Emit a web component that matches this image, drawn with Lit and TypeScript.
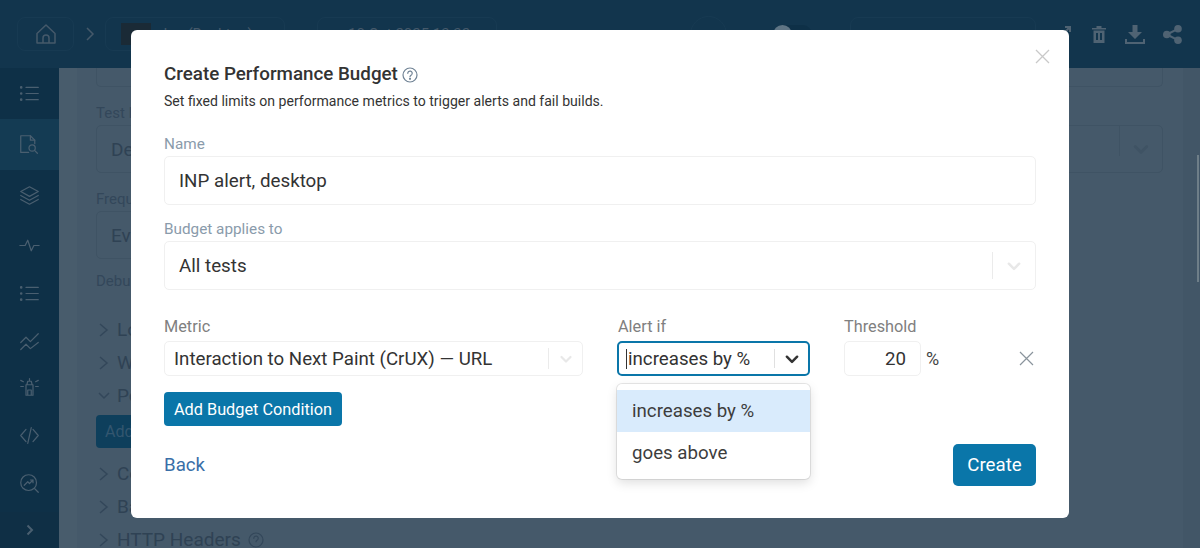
import { LitElement, html, css, svg } from "lit";
import { customElement } from "lit/decorators.js";

const chevron = (w = 14) => html`<svg width=${w} height=${w} viewBox="0 0 14 14" fill="none" stroke="currentColor" stroke-width="2.2" stroke-linecap="round" stroke-linejoin="round"><path d="M2.5 5l4.5 4.5L11.5 5"/></svg>`;

const cross = (w = 17, sw = 1.2) => html`<svg width=${w} height=${w} viewBox="0 0 17 17" stroke="currentColor" stroke-width=${sw}><path d="M2 2l13 13M15 2L2 15"/></svg>`;

const rowChevron = (open = false) => html`<svg class="tw" width="12" height="14" viewBox="0 0 12 14" fill="none" stroke="currentColor" stroke-width="1.500"><path d=${open ? "M1 4l5 5 5-5" : "M2 1l7 6-7 6"}/></svg>`;

const listIcon = svg`<path d="M8 5h14M8 12h14M8 19h14"/><circle cx="2.5" cy="5" r=".8"/><circle cx="2.5" cy="12" r=".8"/><circle cx="2.5" cy="19" r=".8"/>`;

const navIcons = [
  listIcon,
  svg`<path d="M11 21H2V2h11l5 5v4"/><path d="M13 2v5h5"/><circle cx="15" cy="16" r="3.6"/><path d="M18 19l3 3"/>`,
  svg`<path d="M12 2l10 5.5-10 5.5L2 7.5z"/><path d="M2 12l10 5.5L22 12"/><path d="M2 16.5L12 22l10-5.5"/>`,
  svg`<path d="M1 12h6l3-6 4 12 3-6h6"/>`,
  listIcon,
  svg`<path d="M2 12l6-6 5 5 9-9"/><path d="M2 20l6-6 5 5 9-7"/>`,
  svg`<path d="M8 22V10h8v12zM8 22h8M9 10l1-4h4l1 4M12 6V3M10 16h4v6h-4z"/><path d="M2 5l3 1.500M22 5l-3 1.500M2 12h3M19 12h3"/>`,
  svg`<path d="M8 5l-6 7 6 7M16 5l6 7-6 7M14 3l-4 18"/>`,
  svg`<circle cx="11" cy="11" r="9"/><path d="M18 18l4 4M6 14l4-4 2 2 4-4M13 8h3v3"/>`,
];

@customElement("app-root")
export class AppRoot extends LitElement {
  static styles = css`
    :host {
      display: block;
      position: relative;
      width: 1200px;
      height: 548px;
      overflow: hidden;
      font-family: Roboto, "Liberation Sans", sans-serif;
      color: #333;
      background: #45596a;
    }
    * { box-sizing: border-box; }
    .shell {
      display: grid;
      grid-template-columns: 59px 1fr;
      grid-template-rows: 68px 480px;
      height: 100%;
    }
    .top {
      grid-column: 1 / 3;
      background: #12354d;
      display: flex;
      align-items: center;
      padding: 0 18px 0 17px;
      color: #45596a;
    }
    .pill {
      height: 34px;
      border: 1px solid #173a52;
      border-radius: 8px;
      display: flex;
      align-items: center;
      flex: none;
      color: #45596a;
      font-size: 15px;
      white-space: nowrap;
    }
    .home { width: 57px; justify-content: center; }
    .crumb { width: 31px; display: flex; justify-content: center; color: #45596a; }
    .p1 { width: 180px; padding-left: 15px; gap: 8px; }
    .thumb { width: 30px; height: 22px; background: #1a2a36; flex: none; }
    .p2 { width: 180px; margin-left: 32px; padding-left: 30px; }
    .ring { width: 37px; height: 37px; border: 1px solid #173a52; border-radius: 50%; margin-left: 193px; flex: none; }
    .toggle { width: 39px; height: 19px; border-radius: 10px; background: #0e3047; margin-left: 46px; flex: none; }
    .toggle i { display: block; width: 19px; height: 19px; border-radius: 50%; background: #5f7585; }
    .p3 { width: 186px; margin-left: 38px; }
    .expand-out { margin-left: 18px; color: #4f6373; display: flex; }
    .actions { display: flex; gap: 18px; align-items: center; color: #4f6373; margin-left: auto; }
    .actions .trash { margin-right: 1px; }
    .side {
      background: #0e3047;
      display: flex;
      flex-direction: column;
      color: #4a5f70;
    }
    .nav {
      height: 48.6px;
      display: flex;
      align-items: center;
      justify-content: center;
      flex: none;
    }
    .nav.tall { height: 51px; }
    .nav.snug { margin-top: -4.5px; }
    .nav.on { background: #143b53; }
    .side-end { margin-top: auto; height: 36px; display: flex; align-items: center; justify-content: center; background: #0f2f45; }
    .main {
      display: flex;
      flex-direction: column;
      color: #2f4254;
      font-size: 19px;
      position: relative;
      overflow: hidden;
      border-left: 18px solid #485c6c;
      padding-left: 19px;
    }
    .ghost-label { color: #33475a; font-size: 15px; line-height: 16px; }
    .ghost-box {
      width: 1067px;
      height: 48px;
      border: 1px solid #3f5364;
      border-radius: 5px;
      padding-left: 14px;
      display: flex;
      align-items: center;
      flex: none;
      margin-top: 4px;
    }
    .ghost-box.short { width: 800px; }
    .ghost-box .txt { flex: 1; }
    .ghost-box .sep { width: 1px; height: 30px; background: #3f5364; }
    .ghost-box .arrow { width: 42px; display: flex; justify-content: center; color: #3f5364; }
    .ghost-top {
      height: 19px;
      border: 1px solid #3f5364;
      border-top: 0;
      border-radius: 0 0 5px 5px;
      width: 1067px;
      margin-bottom: 18px;
      flex: none;
    }
    .ghost-row {
      height: 33px;
      display: flex;
      align-items: center;
      gap: 7px;
      padding-left: 2px;
      flex: none;
      white-space: nowrap;
    }
    .tw { color: #33475a; flex: none; }
    .ghost-btn {
      width: 60px;
      height: 33px;
      flex: none;
      margin: 3px 0 9px;
      background: #0e3f5c;
      border-radius: 4px;
      color: #33566f;
      font-size: 16px;
      display: flex;
      align-items: center;
      padding-left: 9px;
    }
    .ghost-help { color: #33475a; display: flex; }
    .strip {
      position: absolute;
      right: 0;
      top: 0;
      bottom: 0;
      width: 17px;
      background: #425667;
    }
    .scroll {
      position: absolute;
      right: 1px;
      top: 87px;
      width: 2px;
      height: 127px;
      background: #6e7e88;
    }
    .overlay {
      position: absolute;
      left: 131px;
      top: 30px;
    }
    .modal {
      width: 938px;
      height: 488px;
      background: #fff;
      border-radius: 6px;
      padding: 32px 33px 0;
      position: relative;
    }
    .close {
      position: absolute;
      right: 18px;
      top: 18px;
      color: #c9c9c9;
      display: flex;
    }
    h2 {
      margin: 0;
      font-size: 18.8px;
      line-height: 24px;
      font-weight: 500;
      color: #333;
      display: flex;
      align-items: center;
      gap: 4px;
    }
    h2 svg { color: #6f8294; margin-top: 2px; }
    .sub {
      margin: 5px 0 25px;
      font-size: 14.07px;
      line-height: 20px;
      color: #333;
    }
    .field-label {
      display: block;
      font-size: 15.3px;
      line-height: 17px;
      margin-bottom: 3px;
      color: #8a9bab;
    }
    .box {
      height: 49px;
      border: 1px solid #f0f0f0;
      border-radius: 5px;
      padding: 0 14px;
      display: flex;
      align-items: center;
      font-size: 18.75px;
      color: #333;
    }
    .field { margin-bottom: 16px; }
    .sep { width: 1px; background: #ebebeb; align-self: stretch; }
    .select-large { padding: 0; }
    .select-large .val { flex: 1; padding-left: 14px; }
    .select-large .sep { margin: 10px 0; }
    .select-large .arrow { width: 42px; display: flex; justify-content: center; color: #e8e8e8; }
    .row {
      display: flex;
      margin-top: 27px;
    }
    .col-label {
      display: block;
      font-size: 16.3px;
      line-height: 19px;
      margin-bottom: 5px;
      color: #808080;
    }
    .metric { width: 419px; margin-right: 34px; }
    .alert { width: 193px; margin-right: 34px; position: relative; }
    .alert .col-label { padding-left: 1px; }
    .threshold { width: 77px; }
    .small {
      height: 35px;
      border: 1px solid #f0f0f0;
      border-radius: 5px;
      display: flex;
      align-items: center;
      font-size: 18.7px;
      color: #333;
    }
    .small .val { flex: 1; padding-left: 9px; white-space: nowrap; }
    .small .sep { margin: 6px 0; }
    .small .arrow { width: 33px; display: flex; justify-content: center; color: #e8e8e8; }
    .small.focus { border: 2px solid #0a76a9; }
    .small.focus .val { padding-left: 7px; }
    .small.focus .arrow { color: #333; }
    .small.focus .sep { background: #e0e0e0; }
    .caret { display: inline-block; width: 1px; height: 20px; background: #333; vertical-align: -4px; margin-right: 1px; }
    .num { justify-content: flex-end; padding-right: 14px; }
    .unit { font-size: 18px; margin: 24px 0 0 5px; line-height: 35px; color: #444; }
    .rm { margin: 24px 1px 0 auto; height: 35px; display: flex; align-items: center; color: #8a949c; }
    .menu {
      position: absolute;
      left: 0;
      top: 67px;
      width: 193px;
      height: 95px;
      background: #fff;
      border-radius: 5px;
      padding: 6px 0;
      box-shadow: 0 0 0 1px rgba(0, 0, 0, 0.09), 0 4px 11px rgba(0, 0, 0, 0.13);
      font-size: 18.7px;
    }
    .opt { height: 42px; padding-left: 15px; display: flex; align-items: center; color: #3d3d3d; }
    .opt.on { background: #d9ebfc; }
    button {
      font-family: inherit;
      background: #0a76a9;
      color: #fff;
      border: 0;
      border-radius: 4px;
      padding: 0;
    }
    .add {
      display: block;
      width: 178px;
      height: 34px;
      margin-top: 16px;
      font-size: 16.3px;
    }
    .foot {
      display: flex;
      justify-content: space-between;
      align-items: center;
      margin-top: 18px;
    }
    .back { color: #3a6fa8; font-size: 18.7px; }
    .create { width: 83px; height: 42px; font-size: 18.7px; border-radius: 5px; }
  `;

  render() {
    return html`
      <div class="shell">
        <header class="top">
          <div class="pill home">
            <svg width="22" height="22" viewBox="0 0 22 22" fill="none" stroke="currentColor" stroke-width="1.500" stroke-linejoin="round"><path d="M2 10.500L11 2l9 8.500V20H2z"/><path d="M8 20v-5a3 3 0 016 0v5"/></svg>
          </div>
          <span class="crumb"><svg width="10" height="16" viewBox="0 0 10 16" fill="none" stroke="currentColor" stroke-width="1.500"><path d="M2 2l6 6-6 6"/></svg></span>
          <div class="pill p1"><span class="thumb"></span>Jan (Desktop)</div>
          <div class="pill p2">10 Oct 2025 13:32</div>
          <div class="ring"></div>
          <div class="toggle"><i></i></div>
          <div class="pill p3"></div>
          <span class="expand-out"><svg width="18" height="18" viewBox="0 0 18 18" fill="none" stroke="currentColor" stroke-width="2"><path d="M11 2h5v5M16 2l-7 7M2 7v9h9"/></svg></span>
          <div class="actions">
            <svg class="trash" width="14" height="18" viewBox="0 0 14 18" fill="currentColor"><path d="M0 3h14v1.500H0zM4.500 1h5v2h-5zM1.500 5.500h11V18h-11zM4 8v7h2V8zm4 0v7h2V8z" fill-rule="evenodd"/></svg>
            <svg width="20" height="19" viewBox="0 0 20 19" fill="currentColor"><path d="M7.500 0h5v7H17l-7 7-7-7h4.500zM0 14h2v3h16v-3h2v5H0z"/></svg>
            <svg width="19" height="19" viewBox="0 0 19 19" fill="currentColor"><circle cx="15" cy="3.800" r="3.800"/><circle cx="3.800" cy="9.500" r="3.800"/><circle cx="15" cy="15.200" r="3.800"/><path d="M3.800 9.500L15 3.800M3.800 9.500L15 15.200" stroke="currentColor" stroke-width="2"/></svg>
          </div>
        </header>
        <aside class="side">
          ${navIcons.map(
            (icon, i) => html`<div class="nav ${i < 3 ? "tall" : ""} ${i === 1 ? "on" : ""} ${i === 6 ? "snug" : ""}">
              <svg width="21" height="21" viewBox="0 0 24 24" fill="none" stroke="currentColor" stroke-width="1.400" stroke-linecap="round" stroke-linejoin="round">${icon}</svg>
            </div>`
          )}
          <div class="side-end">
            <svg width="8" height="12" viewBox="0 0 8 12" fill="none" stroke="currentColor" stroke-width="2"><path d="M1.500 1.500L6 6l-4.500 4.500"/></svg>
          </div>
        </aside>
        <main class="main">
          <div class="strip"></div>
          <div class="ghost-top"></div>
          <div class="ghost-label">Test I</div>
          <div class="ghost-box"><span class="txt">De</span><span class="sep"></span><span class="arrow">${chevron(18)}</span></div>
          <div class="ghost-label" style="margin-top:18px">Frequ</div>
          <div class="ghost-box short"><span class="txt">Ev</span></div>
          <div class="ghost-label" style="margin-top:14px;margin-bottom:24px">Debu</div>
          <div class="ghost-row">${rowChevron()}Lo</div>
          <div class="ghost-row">${rowChevron()}W</div>
          <div class="ghost-row">${rowChevron(true)}Po</div>
          <div class="ghost-btn">Add</div>
          <div class="ghost-row">${rowChevron()}Co</div>
          <div class="ghost-row">${rowChevron()}Ba</div>
          <div class="ghost-row">${rowChevron()}HTTP Headers
            <span class="ghost-help"><svg width="16" height="16" viewBox="0 0 16 16" fill="none" stroke="currentColor" stroke-width="1.200"><circle cx="8" cy="8" r="7"/><path d="M5.800 6.300a2.200 2.200 0 114 1.200c-.6.800-1.800 1-1.800 2.200" stroke-linecap="round"/></svg></span>
          </div>
          <div class="scroll"></div>
        </main>
      </div>
      <div class="overlay">
        <section class="modal">
          <span class="close">${cross(17, 1.3)}</span>
          <h2>Create Performance Budget
            <svg width="16" height="16" viewBox="0 0 16 16" fill="none" stroke="currentColor" stroke-width="1.200"><circle cx="8" cy="8" r="7"/><path d="M5.800 6.300a2.200 2.200 0 114 1.200c-.6.800-1.800 1-1.800 2.200" stroke-linecap="round"/><circle cx="8" cy="11.800" r=".5"/></svg>
          </h2>
          <p class="sub">Set fixed limits on performance metrics to trigger alerts and fail builds.</p>
          <div class="field">
            <label class="field-label">Name</label>
            <div class="box">INP alert, desktop</div>
          </div>
          <div class="field">
            <label class="field-label">Budget applies to</label>
            <div class="box select-large">
              <span class="val">All tests</span><span class="sep"></span><span class="arrow">${chevron(16)}</span>
            </div>
          </div>
          <div class="row">
            <div class="metric">
              <label class="col-label">Metric</label>
              <div class="small"><span class="val">Interaction to Next Paint (CrUX) — URL</span><span class="sep"></span><span class="arrow">${chevron()}</span></div>
            </div>
            <div class="alert">
              <label class="col-label">Alert if</label>
              <div class="small focus"><span class="val"><span class="caret"></span>increases by %</span><span class="sep"></span><span class="arrow">${chevron(16)}</span></div>
              <div class="menu">
                <div class="opt on">increases by %</div>
                <div class="opt">goes above</div>
              </div>
            </div>
            <div class="threshold">
              <label class="col-label">Threshold</label>
              <div class="small num">20</div>
            </div>
            <span class="unit">%</span>
            <span class="rm">${cross()}</span>
          </div>
          <button class="add">Add Budget Condition</button>
          <div class="foot">
            <span class="back">Back</span>
            <button class="create">Create</button>
          </div>
        </section>
      </div>
    `;
  }
}
